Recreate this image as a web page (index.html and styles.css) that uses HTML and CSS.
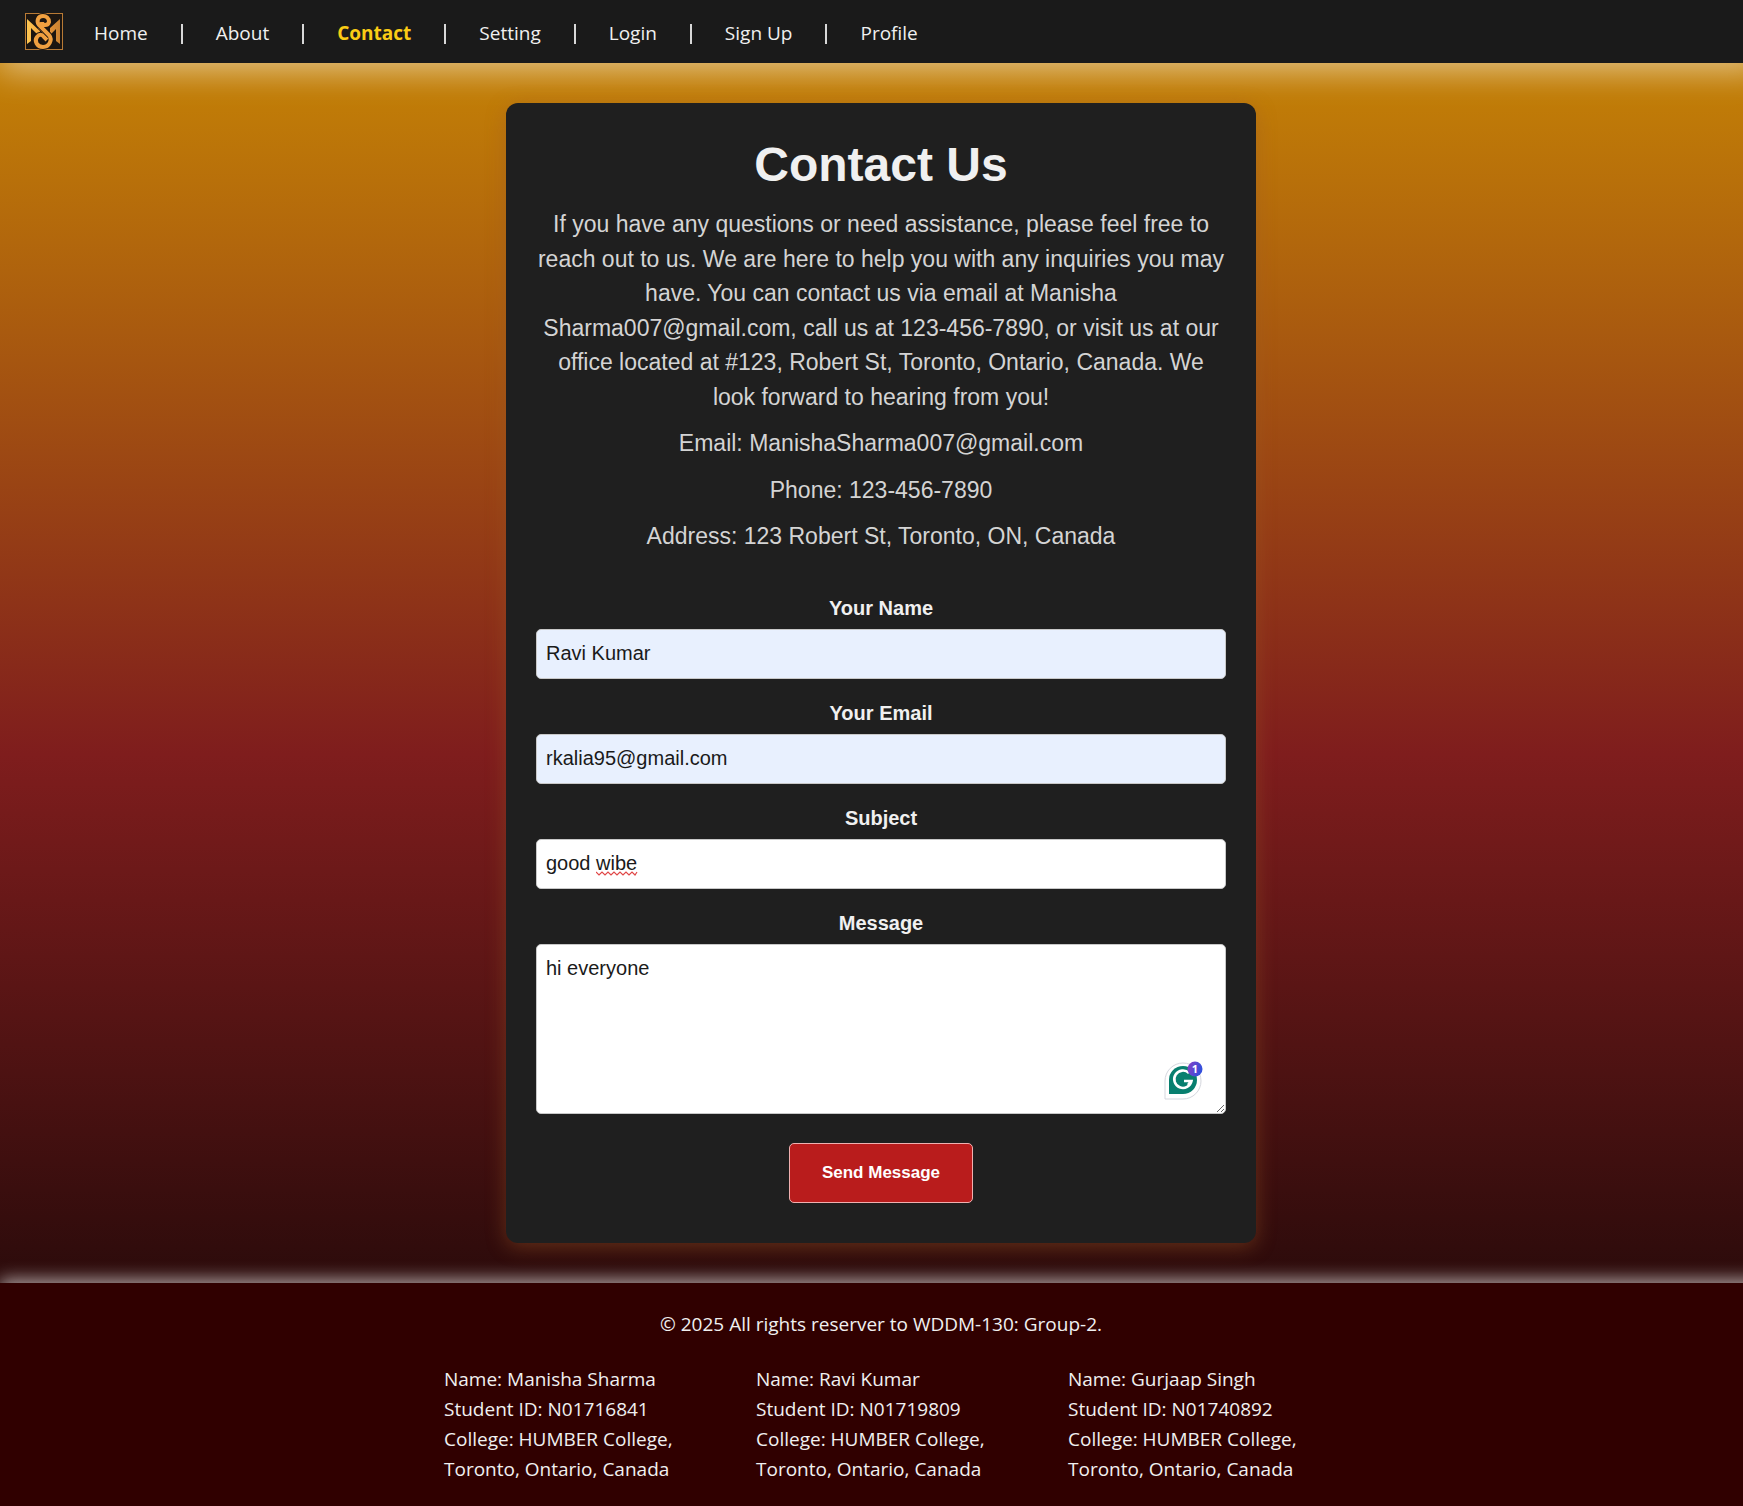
FILE: index.html
```html
<!DOCTYPE html>
<html lang="en">
<head>
<meta charset="utf-8">
<meta name="viewport" content="width=device-width, initial-scale=1">
<title>Contact Us</title>
<link rel="stylesheet" href="styles.css">
</head>
<body>
<header class="site-header">
  <a class="logo" href="#" aria-label="MS home">
    <svg width="38" height="38" viewBox="0 0 38 38" aria-hidden="true">
      <defs>
        <linearGradient id="gold" x1="0" y1="0" x2="1" y2="0">
          <stop offset="0" stop-color="#ffc852"/>
          <stop offset="0.5" stop-color="#f09a38"/>
          <stop offset="1" stop-color="#c98232"/>
        </linearGradient>
      </defs>
      <rect x="0.5" y="0.5" width="37" height="36" fill="#1c1611" stroke="#b87a35"/>
      <path d="M2 6L15 18V24L6 15V28L2 31ZM35 6L25 15V22L31 16V28L35 31Z" fill="url(#gold)"/>
      <path d="M17 10C17 13 23 13 24 9C24 5 21 3 18 3C13 3 11 8 14 12L24 22C28 27 24 34 18 34C12 34 9 28 12 24C14 21 17 21 19 23" fill="none" stroke="#1c1611" stroke-width="6"/>
      <path d="M17 9C17 13 23 13 24 9C24 5 21 3 18 3C13 3 11 8 14 12L24 22C28 27 24 34 18 34C12 34 9 28 12 24C14 21 17 21 19 24L22 27" fill="none" stroke="#f0a040" stroke-width="4"/>
      <path d="M13 15L23 25" stroke="#5a3a18" stroke-width="1"/>
    </svg>
  </a>
  <nav class="nav" aria-label="Main">
    <a class="nav-link" href="#">Home</a><span class="nav-rule"></span>
    <a class="nav-link" href="#">About</a><span class="nav-rule"></span>
    <a class="nav-link nav-link-active" href="#" aria-current="page">Contact</a><span class="nav-rule"></span>
    <a class="nav-link" href="#">Setting</a><span class="nav-rule"></span>
    <a class="nav-link" href="#">Login</a><span class="nav-rule"></span>
    <a class="nav-link" href="#">Sign Up</a><span class="nav-rule"></span>
    <a class="nav-link" href="#">Profile</a>
  </nav>
</header>

<main class="main">
  <section class="card">
    <h1 class="title">Contact Us</h1>
    <p class="text">If you have any questions or need assistance, please feel free to reach out to us. We are here to help you with any inquiries you may have. You can contact us via email at Manisha Sharma007@gmail.com, call us at 123-456-7890, or visit us at our office located at #123, Robert St, Toronto, Ontario, Canada. We look forward to hearing from you!</p>
    <p class="text">Email: ManishaSharma007@gmail.com</p>
    <p class="text">Phone: 123-456-7890</p>
    <p class="text">Address: 123 Robert St, Toronto, ON, Canada</p>

    <form class="form">
      <label class="label" for="name">Your Name</label>
      <input class="field field-filled" id="name" type="text" value="Ravi Kumar">
      <label class="label" for="email">Your Email</label>
      <input class="field field-filled" id="email" type="email" value="rkalia95@gmail.com">
      <label class="label" for="subject">Subject</label>
      <div class="field-wrap">
        <input class="field" id="subject" type="text" value="good wibe" spellcheck="false">
        <svg class="squiggle" width="42" height="5" viewBox="0 0 42 5" aria-hidden="true">
          <path d="M0 1L3 4L6 1L9 4L12 1L15 4L18 1L21 4L24 1L27 4L30 1L33 4L36 1L39 4L41 1" fill="none" stroke="#e04848" stroke-width="1.2"/>
        </svg>
      </div>
      <label class="label" for="message">Message</label>
      <div class="field-wrap">
        <textarea class="field field-message" id="message" spellcheck="false">hi everyone</textarea>
        <svg class="assistant" width="40" height="40" viewBox="0 0 40 40" aria-hidden="true">
          <defs>
            <linearGradient id="badge" x1="0" y1="0" x2="1" y2="0.3">
              <stop offset="0" stop-color="#8a3fc4"/>
              <stop offset="1" stop-color="#3350dc"/>
            </linearGradient>
          </defs>
          <path d="M1 38V20A18 18 0 1 1 19 38Z" fill="#fff" stroke="#d5d7de"/>
          <path d="M5 33V19A14 14 0 1 1 19 33Z" fill="#087f6f"/>
          <path d="M25 12A8.700 8.700 0 1 0 27.500 20H20M27.500 19.500L24 24" fill="none" stroke="#fff" stroke-width="2.600"/>
          <circle cx="31" cy="8" r="7.500" fill="url(#badge)"/>
          <text class="badge-text" x="31" y="12" text-anchor="middle">1</text>
        </svg>
      </div>
      <button class="button" type="submit">Send Message</button>
    </form>
  </section>
</main>

<footer class="site-footer">
  <p class="copyright">© 2025 All rights reserver to WDDM-130: Group-2.</p>
  <div class="members">
    <p class="member">Name: Manisha Sharma<br>Student ID: N01716841<br>College: HUMBER College,<br>Toronto, Ontario, Canada</p>
    <p class="member">Name: Ravi Kumar<br>Student ID: N01719809<br>College: HUMBER College,<br>Toronto, Ontario, Canada</p>
    <p class="member">Name: Gurjaap Singh<br>Student ID: N01740892<br>College: HUMBER College,<br>Toronto, Ontario, Canada</p>
  </div>
</footer>
</body>
</html>
```
FILE: styles.css
```css
* {
  box-sizing: border-box;
}

html {
  overflow-x: hidden;
  background: #300000;
}

body {
  margin: 0 -19px 0 0;
  background: linear-gradient(#ca8a04, #7f1d1d 50%, #080303);
  font-family: "Open Sans", "Noto Sans", sans-serif;
  color: #f0f0f0;
}

h1,
p {
  margin: 0;
}

.site-header {
  position: relative;
  display: flex;
  align-items: center;
  gap: 31px;
  min-height: 63px;
  padding: 0 25px;
  background: #1a1a1a;
  box-shadow: 0 8px 32px rgba(255, 255, 255, 0.5);
}

.logo,
.logo svg {
  display: block;
}

.nav {
  display: flex;
  align-items: center;
  gap: 33px;
  padding-top: 2px;
}

.nav-link {
  font-size: 19px;
  line-height: 28px;
  color: #f0f0f0;
  text-decoration: none;
}

.nav-link-active {
  font-weight: 700;
  color: #facc15;
}

.nav-rule {
  width: 2px;
  height: 20px;
  margin-top: 2px;
  background: #d8d8d8;
}

.main {
  display: flex;
  justify-content: center;
  padding: 40px 20px;
}

.card {
  width: 100%;
  max-width: 750px;
  padding: 30px;
  border-radius: 12px;
  background: #1f1f1f;
  box-shadow: 0 4px 20px rgba(160, 90, 40, 0.45);
  font-family: "Liberation Sans", Arial, sans-serif;
  text-align: center;
}

.title {
  margin-bottom: 10px;
  font-size: 48px;
  line-height: 64px;
}

.text {
  margin-bottom: 12px;
  font-size: 23px;
  line-height: 1.5;
  color: #d4d4d4;
}

.form {
  display: flex;
  flex-direction: column;
  padding-top: 27px;
}

.label {
  margin-bottom: 6px;
  font-size: 20px;
  line-height: 30px;
  font-weight: 700;
}

.field {
  display: block;
  width: 100%;
  height: 50px;
  margin: 0 0 19px;
  padding: 9px;
  border: 1px solid #c8c8c8;
  border-radius: 5px;
  background: #fff;
  font: 20px/28px "Liberation Sans", Arial, sans-serif;
  color: #1a1a1a;
}

.field-filled {
  background: #e8f0fe;
}

.field-message {
  height: 170px;
  margin-bottom: 29px;
  resize: vertical;
}

.field-wrap {
  position: relative;
}

.squiggle {
  position: absolute;
  top: 32px;
  left: 60px;
}

.assistant {
  position: absolute;
  right: 22px;
  bottom: 42px;
}

.badge-text {
  font: 700 11px "Open Sans", sans-serif;
  fill: #fff;
}

.button {
  align-self: center;
  height: 60px;
  margin-bottom: 10px;
  padding: 0 32px;
  border: 1px solid #f0b0b0;
  border-radius: 5px;
  background: #b91c1c;
  font: 700 17px/28px "Liberation Sans", Arial, sans-serif;
  color: #fff;
}

.site-footer {
  position: relative;
  padding: 26px 20px 24px;
  background: #300000;
  box-shadow: 0 -4px 16px rgba(255, 255, 255, 0.6);
}

.copyright {
  margin-bottom: 25px;
  font-size: 19px;
  line-height: 30px;
  text-align: center;
}

.members {
  display: flex;
  flex-wrap: wrap;
  justify-content: center;
  gap: 20px 62px;
}

.member {
  width: 250px;
  font-size: 19px;
  line-height: 30px;
}
```
